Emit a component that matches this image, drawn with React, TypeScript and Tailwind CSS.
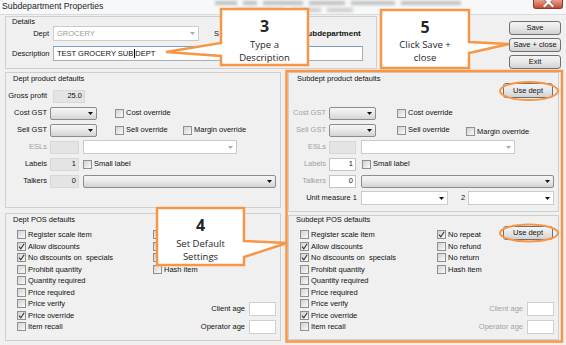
import React from 'react';

const ORANGE = '#f79646';

function Arrow({ dim = false }: { dim?: boolean }) {
  return (
    <svg width="5" height="3" viewBox="0 0 5 3" className="shrink-0">
      <path d="M0 0H5L2.5 3Z" fill={dim ? '#a9a9a9' : '#111'} />
    </svg>
  );
}

function Check({ on = false }: { on?: boolean }) {
  return (
    <span className="flex h-[9px] w-[9px] shrink-0 items-center justify-center border border-[#8f8f8f] bg-linear-to-br from-[#d2d2d2] to-[#fafafa]">
      {on && (
        <svg width="7" height="7" viewBox="0 0 7 7">
          <path d="M1 3.6L2.8 5.8L6.2 0.8" fill="none" stroke="#333" strokeWidth="1.1" />
        </svg>
      )}
    </span>
  );
}

function CheckItem({ label, on = false, className = '' }: { label?: string; on?: boolean; className?: string }) {
  return (
    <div className={`flex items-center gap-[2px] ${className}`}>
      <Check on={on} />
      {label && <span className="whitespace-pre">{label}</span>}
    </div>
  );
}

function BtnCombo({ className = '' }: { className?: string }) {
  return (
    <div
      className={`flex h-[13px] items-center justify-end rounded-[2px] border border-[#8c8c8c] bg-linear-to-b from-[#f6f6f6] via-[#e8e8e8] to-[#d3d3d3] pr-[3px] ${className}`}
    >
      <Arrow />
    </div>
  );
}

function ListCombo({ className = '', dim = false }: { className?: string; dim?: boolean }) {
  return (
    <div className={`flex h-[14px] items-center justify-end border border-[#cbcbcb] bg-white pr-[3px] ${className}`}>
      <Arrow dim={dim} />
    </div>
  );
}

function Field({ className = '', gray = false, children }: { className?: string; gray?: boolean; children?: React.ReactNode }) {
  return (
    <div
      className={`flex h-[13px] items-center justify-end border pr-[2px] ${
        gray ? 'border-[#d8d8d8] bg-[#e4e4e4]' : 'border-[#c4c4c4] bg-white'
      } ${className}`}
    >
      {children}
    </div>
  );
}

function WinButton({ children, className = '' }: { children: React.ReactNode; className?: string }) {
  return (
    <div
      className={`flex h-[14px] items-center justify-center rounded-[3px] border border-[#707070] bg-linear-to-b from-[#f4f4f4] via-[#e7e7e7] to-[#d1d1d1] ${className}`}
    >
      {children}
    </div>
  );
}

function AgeRow({ label, dim = false }: { label: string; dim?: boolean }) {
  return (
    <div className="flex h-[14px] items-center">
      <span className={dim ? 'text-[#a3a3a3]' : ''}>{label}</span>
      <div className="ml-[4px] h-[14px] w-[27px] border border-[#cfcfcf] bg-white" />
    </div>
  );
}

type Item = { label?: string; on: boolean };

const posItems: Item[] = [
  { label: 'Register scale item', on: false },
  { label: 'Allow discounts', on: true },
  { label: 'No discounts on  specials', on: true },
  { label: 'Prohibit quantity', on: false },
  { label: 'Quantity required', on: false },
  { label: 'Price required', on: false },
  { label: 'Price verify', on: false },
  { label: 'Price override', on: true },
  { label: 'Item recall', on: false },
];

const posExtra: Item[] = [
  { label: 'No repeat', on: true },
  { label: 'No refund', on: false },
  { label: 'No return', on: false },
  { label: 'Hash item', on: false },
];

// labels of the first three sit under callout 4, only the boxes peek out
const deptExtra: Item[] = [{ on: false }, { on: false }, { on: false }, { label: 'Hash item', on: false }];

function PosList({ items }: { items: Item[] }) {
  return (
    <div className="flex flex-col">
      {items.map((it, i) => (
        <CheckItem key={i} label={it.label} on={it.on} className="h-[11.5px]" />
      ))}
    </div>
  );
}

export default function App() {
  const gray = 'text-[#a0a0a0]';
  return (
    <div className="relative h-[345px] w-[566px] overflow-hidden bg-[#f0f0f0] font-['Liberation_Sans',Arial,sans-serif] text-[7.5px] leading-none text-[#111]">
      {/* title bar */}
      <div className="flex h-[15px] items-start border-b border-[#d9d9d9] bg-[#f7f8f9]">
        <span className="pl-[2px] pt-[2px] text-[8.7px] text-[#1e1e1e]">Subdepartment Properties</span>
        <div className="ml-[112px] mt-[1px] flex flex-col gap-[3px] opacity-60 blur-[1.5px]">
          <div className="flex gap-[6px]">
            <span className="h-[4px] w-[22px] bg-[#9a9a9a]" />
            <span className="h-[4px] w-[14px] bg-[#9a9a9a]" />
            <span className="h-[4px] w-[40px] bg-[#9a9a9a]" />
            <span className="h-[4px] w-[36px] bg-[#9a9a9a]" />
            <span className="h-[4px] w-[44px] bg-[#9a9a9a]" />
            <span className="h-[4px] w-[60px] bg-[#9a9a9a]" />
          </div>
          <div className="ml-[20px] flex gap-[6px]">
            <span className="h-[4px] w-[50px] bg-[#b0b0b0]" />
            <span className="h-[4px] w-[30px] bg-[#b0b0b0]" />
            <span className="h-[4px] w-[26px] bg-[#b0b0b0]" />
          </div>
        </div>
        <div className="ml-auto mr-[3px] h-[9px] w-[30px] overflow-hidden rounded-b-[3px] border border-t-0 border-[#8d3b2b] bg-linear-to-b from-[#e7a08f] to-[#c9462f]">
          <svg width="30" height="9" viewBox="0 0 30 9">
            <path d="M10.5 -4L14.5 0L18.5 -4L20.5 -2L16.5 2L20.5 6L18.5 8L14.5 4L10.5 8L8.5 6L12.5 2L8.5 -2Z" fill="#fff" stroke="#5a2a20" strokeWidth="0.6" />
          </svg>
        </div>
      </div>

      {/* body */}
      <div className="pl-[5px]">
        <div className="mt-[1px] flex items-start">
          <div className="h-[53px] w-[372px] border border-[#cfcfcf] pl-[6px] pt-[1px]">
            <div className="h-[8px] leading-[8px]">Details</div>
            <div className="flex h-[15px] items-center">
              <span className="w-[37px] text-right">Dept</span>
              <div className="ml-[4px] flex h-[15px] w-[146px] items-center justify-between border border-[#cbcbcb] bg-white px-[3px] text-[#9b9b9b]">
                <span>GROCERY</span>
                <Arrow dim />
              </div>
              <span className="ml-[15px]">S</span>
              <span className="ml-[83px] text-[8px] font-bold">Subdepartment</span>
            </div>
            <div className="mt-[5px] flex h-[15px] items-center">
              <span className="w-[37px] text-right">Description</span>
              <div className="ml-[4px] flex h-[15px] w-[310px] items-center border border-[#abadb3] border-t-[#7b9dc8] bg-white px-[3px]">
                TEST GROCERY SUB
                <span className="mx-[0.5px] inline-block h-[9px] w-px bg-black" />
                DEPT
              </div>
            </div>
          </div>
          <div className="ml-[132px] mt-[5px] flex w-[52px] flex-col gap-[3px]">
            <WinButton>Save</WinButton>
            <WinButton>Save + close</WinButton>
            <WinButton>Exit</WinButton>
          </div>
        </div>

        <div className="mt-[3px] flex gap-[7px]">
          {/* left column */}
          <div className="flex w-[276px] flex-col gap-[5px]">
            <div className="h-[136px] border border-[#cfcfcf] pt-[2px]">
              <div className="h-[8px] pl-[7px] leading-[8px]">Dept product defaults</div>
              <div className="mt-[6px] flex flex-col gap-[3px]">
                <div className="flex h-[14px] items-center">
                  <span className="w-[41px] text-right">Gross profit</span>
                  <Field gray className="ml-[6px] h-[12px] w-[32px]">25.0</Field>
                </div>
                <div className="flex h-[14px] items-center">
                  <span className="w-[41px] text-right">Cost GST</span>
                  <BtnCombo className="ml-[3px] w-[47px]" />
                  <CheckItem label="Cost override" className="ml-[18px]" />
                </div>
                <div className="flex h-[14px] items-center">
                  <span className="w-[41px] text-right">Sell GST</span>
                  <BtnCombo className="ml-[3px] w-[47px]" />
                  <CheckItem label="Sell override" className="ml-[18px] w-[68px]" />
                  <CheckItem label="Margin override" />
                </div>
                <div className="flex h-[14px] items-center">
                  <span className={`w-[41px] text-right ${gray}`}>ESLs</span>
                  <Field gray className="ml-[3px] w-[29px]" />
                  <ListCombo dim className="ml-[4px] w-[154px]" />
                </div>
                <div className="flex h-[14px] items-center">
                  <span className="w-[41px] text-right">Labels</span>
                  <Field gray className="ml-[3px] w-[29px]">1</Field>
                  <CheckItem label="Small label" className="ml-[4px]" />
                </div>
                <div className="flex h-[14px] items-center">
                  <span className="w-[41px] text-right">Talkers</span>
                  <Field gray className="ml-[3px] w-[29px]">0</Field>
                  <BtnCombo className="ml-[4px] w-[193px]" />
                </div>
              </div>
            </div>

            <div className="h-[128px] border border-[#cfcfcf]">
              <div className="mt-[2px] h-[8px] pl-[7px] leading-[8px]">Dept POS defaults</div>
              <div className="mt-[5px] flex h-[105px] pl-[11px] pr-[4px]">
                <div className="w-[136px]">
                  <PosList items={posItems} />
                </div>
                <div className="flex flex-1 flex-col">
                  <PosList items={deptExtra} />
                  <div className="mt-auto flex flex-col items-end gap-[4px]">
                    <AgeRow label="Client age" />
                    <AgeRow label="Operator age" />
                  </div>
                </div>
              </div>
            </div>
          </div>

          {/* right column */}
          <div className="flex w-[271px] flex-col gap-[3px]">
            <div className="h-[140px] border border-[#cfcfcf] pt-[2px]">
              <div className="h-[8px] pl-[8px] leading-[8px]">Subdept product defaults</div>
              <div className="flex h-[15px] justify-end pr-[5px]">
                <WinButton className="h-[15px] w-[50px]">Use dept</WinButton>
              </div>
              <div className="mt-[8px] flex flex-col gap-[3px]">
                <div className="flex h-[14px] items-center">
                  <span className={`w-[37px] text-right ${gray}`}>Cost GST</span>
                  <BtnCombo className="ml-[3px] w-[47px]" />
                  <CheckItem label="Cost override" className="ml-[21px]" />
                </div>
                <div className="flex h-[14px] items-center">
                  <span className={`w-[37px] text-right ${gray}`}>Sell GST</span>
                  <BtnCombo className="ml-[3px] w-[47px]" />
                  <CheckItem label="Sell override" className="ml-[21px] w-[69px]" />
                  <CheckItem label="Margin override" className="mt-[3px]" />
                </div>
                <div className="flex h-[14px] items-center">
                  <span className={`w-[37px] text-right ${gray}`}>ESLs</span>
                  <Field gray className="ml-[3px] w-[27px]" />
                  <ListCombo dim className="ml-[5px] w-[154px]" />
                </div>
                <div className="flex h-[14px] items-center">
                  <span className={`w-[37px] text-right ${gray}`}>Labels</span>
                  <Field className="ml-[3px] w-[27px]">1</Field>
                  <CheckItem label="Small label" className="ml-[6px]" />
                </div>
                <div className="flex h-[14px] items-center">
                  <span className={`w-[37px] text-right ${gray}`}>Talkers</span>
                  <Field className="ml-[3px] w-[27px]">0</Field>
                  <BtnCombo className="ml-[5px] w-[193px]" />
                </div>
                <div className="flex h-[14px] items-center">
                  <span className="w-[68px] text-right">Unit measure 1</span>
                  <ListCombo className="ml-[4px] w-[87px]" />
                  <span className="ml-[13px]">2</span>
                  <ListCombo className="ml-[3px] w-[86px]" />
                </div>
              </div>
            </div>

            <div className="h-[125px] border border-[#cfcfcf]">
              <div className="h-[8px] pl-[7px] leading-[8px]">Subdept POS defaults</div>
              <div className="mt-[5px] flex h-[105px] pl-[11px] pr-[4px]">
                <div className="w-[137px]">
                  <PosList items={posItems} />
                </div>
                <div className="flex flex-1 flex-col">
                  <div className="flex items-start">
                    <PosList items={posExtra} />
                    <WinButton className="-mt-[3px] ml-auto mr-[1px] w-[50px]">Use dept</WinButton>
                  </div>
                  <div className="mt-auto flex flex-col items-end gap-[4px]">
                    <AgeRow label="Client age" dim />
                    <AgeRow label="Operator age" dim />
                  </div>
                </div>
              </div>
            </div>
          </div>
        </div>
      </div>

      {/* annotation overlay */}
      <svg className="pointer-events-none absolute left-0 top-0" width="566" height="345" viewBox="0 0 566 345">
        <rect x="286.5" y="71" width="275.5" height="270.5" fill="none" stroke={ORANGE} strokeWidth="2.5" />
        <ellipse cx="529" cy="91" rx="29" ry="9" fill="none" stroke={ORANGE} strokeWidth="2" />
        <ellipse cx="529" cy="233" rx="29" ry="8.5" fill="none" stroke={ORANGE} strokeWidth="2" />
        <path d="M221 9H308V65H221V56L166 52L221 43Z" fill="#fff" stroke={ORANGE} strokeWidth="2.5" />
        <path d="M381 10H469V42L509 44L469 53V68H381Z" fill="#fff" stroke={ORANGE} strokeWidth="2.5" />
        <path d="M157 208H244V241L287 243L244 257V265H157Z" fill="#fff" stroke={ORANGE} strokeWidth="2.5" />
      </svg>

      <div className="absolute left-[221px] top-[9px] flex w-[87px] flex-col items-center pt-[9px] font-['Open_Sans',sans-serif] text-[#262626]">
        <div className="h-[16px] text-[16px] font-bold leading-[16px]">3</div>
        <div className="mt-[3.5px] text-center text-[9.5px] leading-[13px]">
          Type a
          <br />
          Description
        </div>
      </div>
      <div className="absolute left-[381px] top-[10px] flex w-[88px] flex-col items-center pt-[9px] font-['Open_Sans',sans-serif] text-[#262626]">
        <div className="h-[16px] text-[16px] font-bold leading-[16px]">5</div>
        <div className="mt-[2.5px] text-center text-[9.5px] leading-[13px]">
          Click Save +
          <br />
          close
        </div>
      </div>
      <div className="absolute left-[157px] top-[208px] flex w-[87px] flex-col items-center pt-[9px] font-['Open_Sans',sans-serif] text-[#262626]">
        <div className="h-[16px] text-[16px] font-bold leading-[16px]">4</div>
        <div className="mt-[3.5px] text-center text-[9.5px] leading-[13px]">
          Set Default
          <br />
          Settings
        </div>
      </div>
    </div>
  );
}
